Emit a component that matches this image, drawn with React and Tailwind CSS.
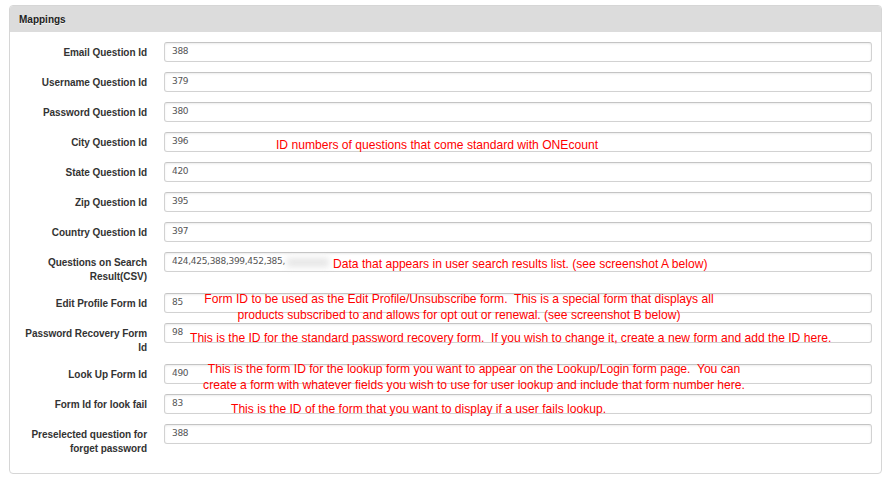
import React from 'react';

const rows = [
  { label: ['Email Question Id'], value: '388' },
  { label: ['Username Question Id'], value: '379' },
  { label: ['Password Question Id'], value: '380' },
  { label: ['City Question Id'], value: '396' },
  { label: ['State Question Id'], value: '420' },
  { label: ['Zip Question Id'], value: '395' },
  { label: ['Country Question Id'], value: '397' },
  { label: ['Questions on Search', 'Result(CSV)'], value: '424,425,388,399,452,385,', hidden: true },
  { label: ['Edit Profile Form Id'], value: '85' },
  { label: ['Password Recovery Form', 'Id'], value: '98' },
  { label: ['Look Up Form Id'], value: '490' },
  { label: ['Form Id for look fail'], value: '83' },
  { label: ['Preselected question for', 'forget password'], value: '388' },
];

const notes = [
  { top: 'top-[138px]', left: 'left-[276px]', lines: ['ID numbers of questions that come standard with ONEcount'] },
  { top: 'top-[257px]', left: 'left-[333px]', lines: ['Data that appears in user search results list. (see screenshot A below)'] },
  {
    top: 'top-[291px]',
    left: 'left-[159px]',
    width: 'w-[600px] text-center leading-[16px]',
    lines: [
      'Form ID to be used as the Edit Profile/Unsubscribe form.\u00a0 This is a special form that displays all',
      'products subscribed to and allows for opt out or renewal. (see screenshot B below)',
    ],
  },
  {
    top: 'top-[331px]',
    left: 'left-[190px]',
    lines: ['This is the ID for the standard password recovery form.\u00a0 If you wish to change it, create a new form and add the ID here.'],
  },
  {
    top: 'top-[361px]',
    left: 'left-[174px]',
    width: 'w-[600px] text-center leading-[16px]',
    lines: [
      'This is the form ID for the lookup form you want to appear on the Lookup/Login form page.\u00a0 You can',
      'create a form with whatever fields you wish to use for user lookup and include that form number here.',
    ],
  },
  { top: 'top-[402px]', left: 'left-[231px]', lines: ['This is the ID of the form that you want to display if a user fails lookup.'] },
];

export default function App() {
  return (
    <div className="relative w-[891px] h-[480px] bg-white px-[9px] pt-[5px] font-['Liberation_Sans',Arial,sans-serif]">
      <div className="border border-[#d6d6d6] rounded-[4px] bg-white">
        <div className="h-[26px] bg-[#dcdcdc] rounded-t-[3px] px-[9px] flex items-center text-[10px] font-bold text-[#222] [text-shadow:0_1px_0_rgba(255,255,255,0.6)]">
          Mappings
        </div>
        <div className="pt-[10px] pb-[8px]">
          {rows.map((row, i) => (
            <div key={i} className="flex mb-[10px]">
              <div className="w-[137px] shrink-0 pt-[4px] -mb-[1px] text-right text-[10px] leading-[14px] font-bold text-[#333] tracking-[-0.05px]">
                {row.label.map((l, j) => (
                  <div key={j}>{l}</div>
                ))}
              </div>
              <div className="ml-[17px] mr-[9px] flex-1 h-[20px] border border-[#d2d2d2] border-t-[#c4c4c4] rounded-[3px] bg-white shadow-[inset_0_1px_2px_rgba(0,0,0,0.08)] pl-[7px] flex items-center text-[9px] text-[#555] font-['Verdana','DejaVu_Sans',sans-serif] tracking-[-0.3px]">
                <span>{row.value}</span>
                {row.hidden && <span className="ml-[2px] w-[42px] h-[9px] bg-[#e6e6e6] blur-[3px]" />}
              </div>
            </div>
          ))}
        </div>
      </div>

      {notes.map((n, i) => (
        <div
          key={i}
          className={`absolute ${n.top} ${n.left} ${n.width || 'whitespace-nowrap leading-[14px]'} text-[12.1px] text-[#f00]`}
        >
          {n.lines.map((l, j) => (
            <div key={j}>{l}</div>
          ))}
        </div>
      ))}
    </div>
  );
}
